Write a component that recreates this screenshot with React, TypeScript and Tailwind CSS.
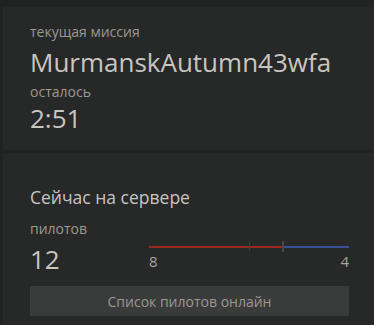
export default function App() {
  const red = 8;
  const blue = 4;
  const redPct = (red / (red + blue)) * 100;

  return (
    <div className="w-[374px] h-[325px] bg-[#212222] pt-[7px] pl-[3px] font-['Open_Sans',sans-serif] overflow-hidden">
      {/* Mission */}
      <section className="bg-[#272828] h-[143px] pl-[27px] pr-[25px] pt-[15px]">
        <p className="text-[14px] leading-[20px] text-[#9c9893]">текущая миссия</p>
        <p className="text-[26px] leading-[40px] text-[#c9c5c0]">MurmanskAutumn43wfa</p>
        <p className="text-[14px] leading-[20px] text-[#9c9893]">осталось</p>
        <p className="text-[26px] leading-[33px] text-[#c9c5c0]">2:51</p>
      </section>

      {/* Server */}
      <section className="bg-[#272828] h-[175px] mt-[3px] pl-[27px] pr-[25px] pt-[31px]">
        <h2 className="text-[17.5px] leading-[26px] text-[#c9c5c0]">Сейчас на сервере</h2>
        <div className="flex mt-[9px]">
          <div className="w-[119px]">
            <p className="text-[14px] leading-[20px] text-[#9c9893]">пилотов</p>
            <p className="text-[26px] leading-[34px] text-[#c9c5c0] mt-[3px]">12</p>
          </div>
          <div className="flex-1 pt-[27px]">
            <div className="relative h-[2px] flex">
              <div className="h-full bg-[#9a2a1e]" style={{ width: `${redPct}%` }} />
              <div className="h-full flex-1 bg-[#3a5196]" />
              <div className="absolute left-[100px] top-[-4px] w-[1px] h-[9px] bg-[#3f4040]" />
              <div className="absolute left-[133px] top-[-5px] w-[2px] h-[11px] bg-[#474848]" />
            </div>
            <div className="flex justify-between text-[15px] leading-[20px] text-[#a9a49e] mt-[3px]">
              <span>{red}</span>
              <span>{blue}</span>
            </div>
          </div>
        </div>
        <button className="mt-[10px] w-full h-[30px] bg-[#3a3b3b] text-[14px] text-[#9c9893] flex items-center justify-center">
          Список пилотов онлайн
        </button>
      </section>
    </div>
  );
}
